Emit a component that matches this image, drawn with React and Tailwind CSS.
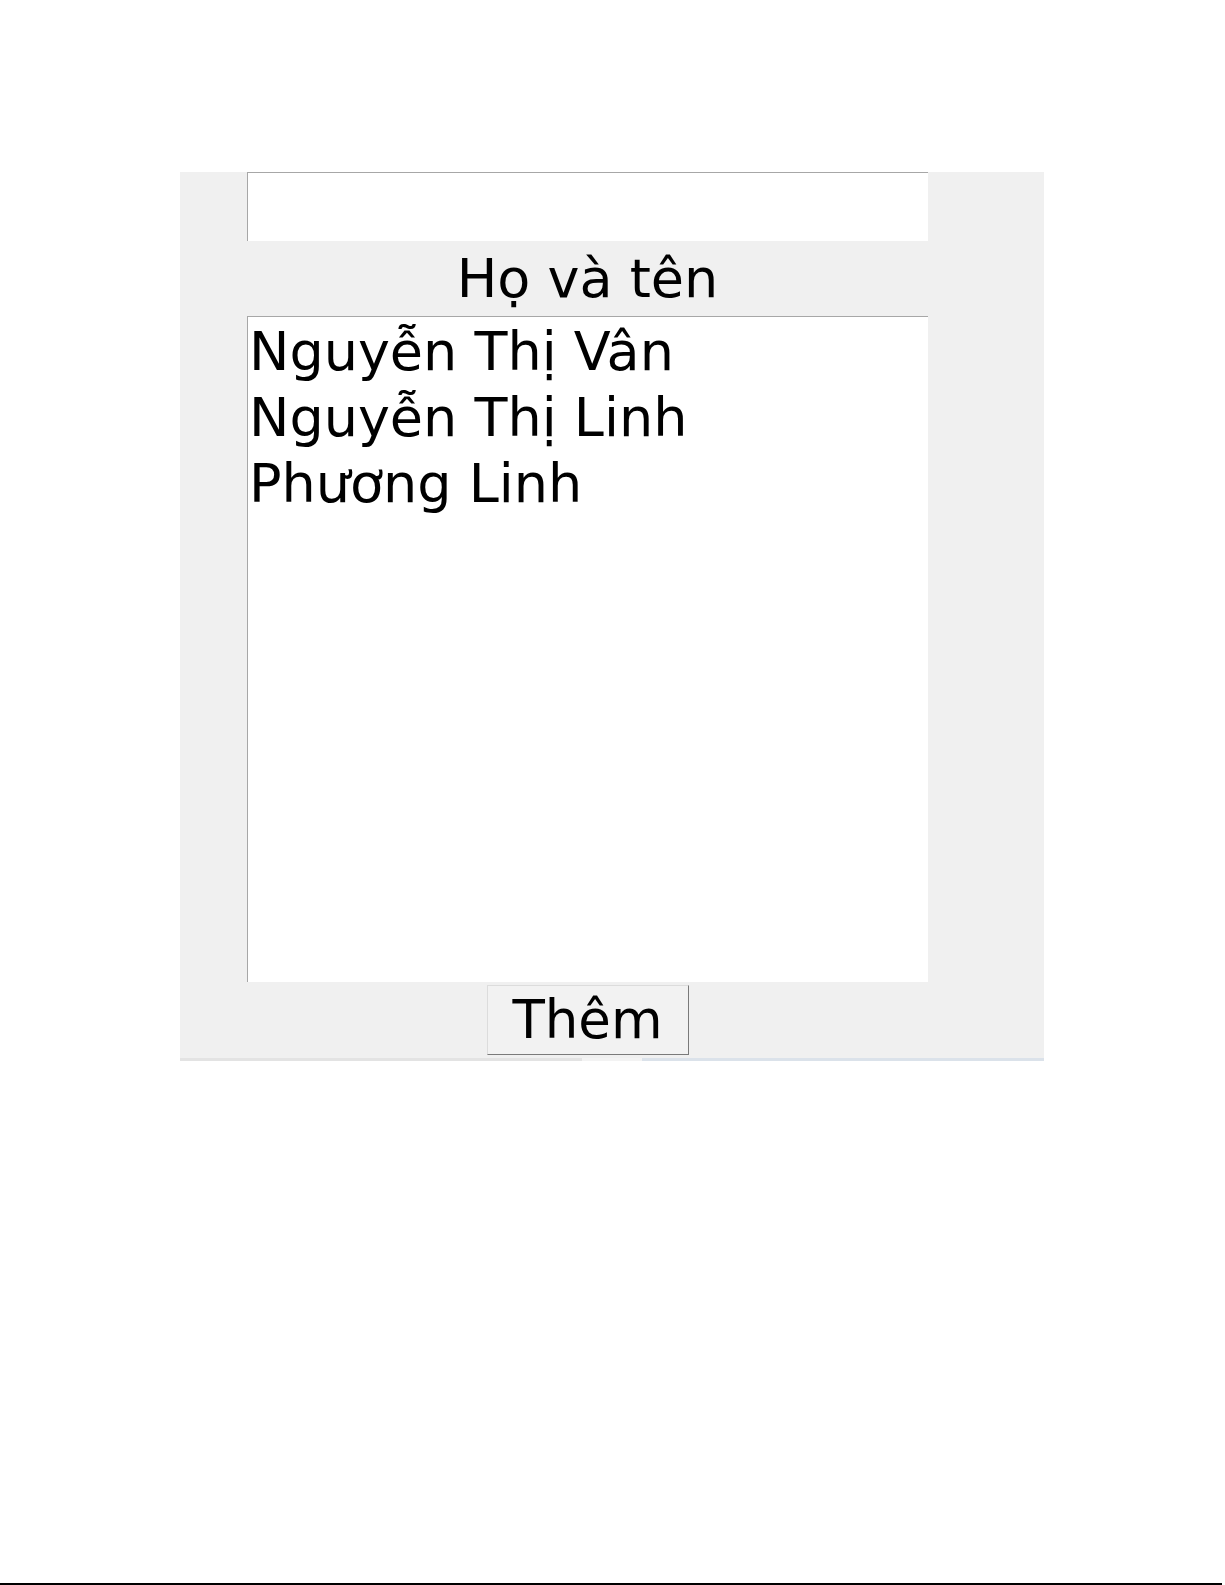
export default function App() {
    const names = ["Nguyễn Thị Vân", "Nguyễn Thị Linh", "Phương Linh"];

    return (
        <div className="w-full h-[1585px] bg-white flex flex-col font-['DejaVu_Sans',sans-serif] text-black">
            <div className="pt-[172px] pl-[180px]">
                <div className="w-[864px] bg-[#f0f0f0] flex flex-col">
                    <div className="pl-[67px] flex">
                        <div className="w-[681px] flex flex-col items-center">
                            <input
                                type="text"
                                className="w-full h-[69px] bg-white border-t border-l border-[#a7a7a7] outline-none"
                            />
                            <div className="h-[75px] text-[54px] leading-[75px] text-center">Họ và tên</div>
                            <div className="w-full h-[666px] bg-white border-t border-l border-[#a7a7a7] text-[54px] leading-[66px] pl-[1px] pt-[2px]">
                                {names.map((n) => (
                                    <div key={n}>{n}</div>
                                ))}
                            </div>
                            <button className="mt-[3px] w-[202px] h-[70px] bg-[#f2f2f2] border border-t-[#dcdcdc] border-l-[#dcdcdc] border-r-[#7a7a7a] border-b-[#7a7a7a] text-[53px] leading-[66px]">
                                Thêm
                            </button>
                        </div>
                    </div>
                    <div className="h-[3px]" />
                    <div className="flex h-[3px]">
                        <div className="w-[402px] bg-[#e3e3e3]" />
                        <div className="w-[60px] bg-[#f3f3f3]" />
                        <div className="flex-1 bg-[#dbe2ea]" />
                    </div>
                </div>
            </div>
            <div className="flex-1" />
            <div className="h-[2px] w-[1222px] bg-black" />
        </div>
    );
}
